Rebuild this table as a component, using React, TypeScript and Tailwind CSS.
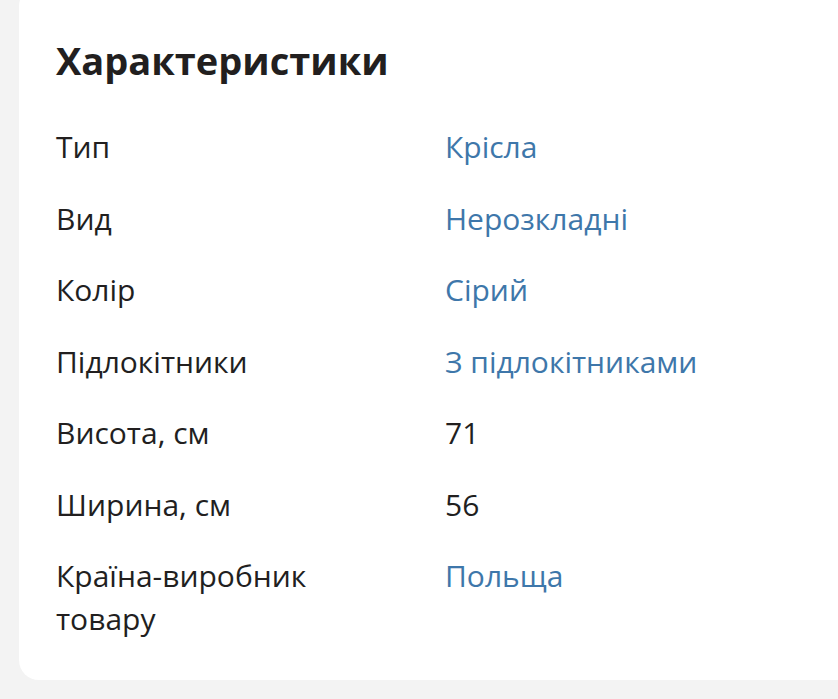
const rows: { label: string; value: string; link: boolean }[] = [
  { label: 'Тип', value: 'Крісла', link: true },
  { label: 'Вид', value: 'Нерозкладні', link: true },
  { label: 'Колір', value: 'Сірий', link: true },
  { label: 'Підлокітники', value: 'З підлокітниками', link: true },
  { label: 'Висота, см', value: '71', link: false },
  { label: 'Ширина, см', value: '56', link: false },
  { label: 'Країна-виробник товару', value: 'Польща', link: true },
]

const App = () => {
  return (
    <div className="w-[838px] h-[699px] overflow-hidden bg-[#f3f3f3] font-['Open_Sans',sans-serif]">
      <div className="ml-[19px] mt-[-14px] w-[840px] rounded-[20px] bg-white pl-[37px] pt-[51px] pb-[40px]">
        <h2 className="text-[38px] leading-[46px] font-bold text-[#221f1f]">Характеристики</h2>
        <div className="mt-[42px] grid grid-cols-[300px_1fr] gap-x-[89px] gap-y-[28.5px] text-[30px] leading-[43px] text-[#221f1f]">
          {rows.map((row, i) => (
            <div className="contents" key={i}>
              <span>{row.label}</span>
              <span className={row.link ? 'text-[#3e77aa]' : ''}>{row.value}</span>
            </div>
          ))}
        </div>
      </div>
    </div>
  )
}

export default App
